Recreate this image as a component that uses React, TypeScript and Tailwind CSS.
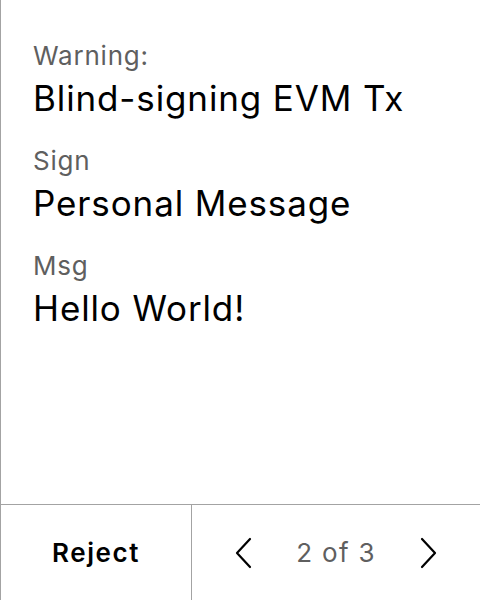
import React from "react";

type Field = {
  label: string;
  value: string;
};

const fields: Field[] = [
  { label: "Warning:", value: "Blind-signing EVM Tx" },
  { label: "Sign", value: "Personal Message" },
  { label: "Msg", value: "Hello World!" },
];

const Chevron: React.FC<{ dir: "left" | "right" }> = ({ dir }) => (
  <svg width="20" height="32" viewBox="0 0 20 32" fill="none">
    <path
      d={dir === "left" ? "M16 2 L3 16 L16 30" : "M4 2 L17 16 L4 30"}
      stroke="#000"
      strokeWidth="2.2"
      strokeLinecap="round"
      strokeLinejoin="round"
    />
  </svg>
);

const App: React.FC = () => {
  return (
    <div
      className="w-[480px] h-[600px] bg-white flex flex-col border-l border-[#a3a3a3] overflow-hidden"
      style={{ fontFamily: "Inter, 'Noto Sans', sans-serif" }}
    >
      <section className="flex-1 px-8 pt-[41px] flex flex-col gap-[27px]">
        {fields.map((f) => (
          <div key={f.label} className="flex flex-col">
            <p className="text-[26px] leading-[30px] tracking-[0.03em] text-[#5f5f5f]">{f.label}</p>
            <p className="mt-[6px] text-[35px] leading-[42px] tracking-[0.025em] text-black">{f.value}</p>
          </div>
        ))}
      </section>

      <div className="h-[96px] flex border-t border-[#a3a3a3]">
        <button className="w-[191px] flex items-center justify-center text-[26px] font-semibold tracking-[0.06em] text-black border-r border-[#a3a3a3]">
          Reject
        </button>
        <div className="flex-1 flex items-center justify-between pl-[42px] pr-[42px]">
          <Chevron dir="left" />
          <span className="text-[26px] tracking-[0.05em] text-[#5f5f5f]">2 of 3</span>
          <Chevron dir="right" />
        </div>
      </div>
    </div>
  );
};

export default App;
